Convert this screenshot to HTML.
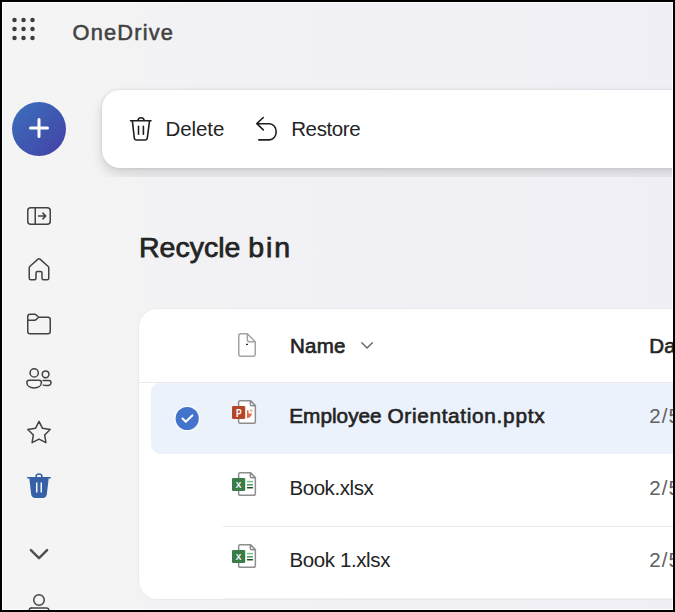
<!DOCTYPE html>
<html lang="en">
<head>
<meta charset="utf-8">
<title>Recycle bin - OneDrive</title>
<style>
html,body{margin:0;padding:0;}
body{width:675px;height:612px;overflow:hidden;background:#000;font-family:"Liberation Sans",sans-serif;}
#frame{position:absolute;left:0;top:0;width:675px;height:612px;background:#000;overflow:hidden;}
#inner{position:absolute;left:2px;top:2px;width:671px;height:608px;background:#fff;overflow:hidden;}
#app{position:absolute;left:0;top:0;width:671px;height:608px;overflow:hidden;box-shadow:inset 0 0 0 1px #fff;
  background:linear-gradient(90deg,#f4f4f4 0%,#f4f4f4 10%,#f2f2f5 30%,#f0eff5 100%);}
/* all coordinates below are relative to #app whose origin is (3,3) in page px */
.abs{position:absolute;}
.t{position:absolute;white-space:nowrap;line-height:1;}
svg{position:absolute;overflow:visible;}
#toolbarclip{position:absolute;left:80px;top:60px;width:589px;height:114px;overflow:hidden;}
#toolbar{position:absolute;left:19px;top:27px;width:600px;height:78px;background:#fff;border-radius:18px 0 0 18px;
  box-shadow:0 6px 12px rgba(0,0,0,.14),0 0 3px rgba(0,0,0,.12);}
#card{position:absolute;left:136px;top:305.5px;width:560px;height:290.5px;background:#fff;border-radius:18px 0 0 18px;
  box-shadow:0 0 0 1px rgba(0,0,0,.035);}
#sel{position:absolute;left:148px;top:380px;width:560px;height:71px;background:#ecf2fb;border-radius:9px 0 0 9px;}
.hr{position:absolute;height:1px;background:#ebebeb;}
</style>
</head>
<body>
<div id="frame"><div id="inner"><div id="app"><div id="o" class="abs" style="left:1px;top:1px;width:669px;height:606px;">

<!-- header -->
<svg width="30" height="30" style="left:5px;top:11px" viewBox="0 0 30 30">
  <g fill="#3d3d3d">
    <circle cx="6.5" cy="6.1" r="2.25"/><circle cx="15.5" cy="6.1" r="2.25"/><circle cx="24.5" cy="6.1" r="2.25"/>
    <circle cx="6.5" cy="15.1" r="2.25"/><circle cx="15.5" cy="15.1" r="2.25"/><circle cx="24.5" cy="15.1" r="2.25"/>
    <circle cx="6.5" cy="24.1" r="2.25"/><circle cx="15.5" cy="24.1" r="2.25"/><circle cx="24.5" cy="24.1" r="2.25"/>
  </g>
</svg>
<div class="t" id="t_brand" style="left:69.5px;top:19px;font-size:21.8px;color:#424242;-webkit-text-stroke:0.55px #424242;letter-spacing:1.2px;">OneDrive</div>

<!-- new button -->
<div class="abs" style="left:9px;top:99px;width:54px;height:54px;border-radius:50%;background:linear-gradient(135deg,#3c70bd 0%,#3f59b1 50%,#4340a6 100%);"></div>
<svg width="30" height="30" style="left:20.5px;top:110.2px" viewBox="0 0 30 30"><path d="M15 6.6V23.6M6.5 15.1H23.5" stroke="#fff" stroke-width="3" stroke-linecap="round" fill="none"/></svg>

<!-- toolbar -->
<div id="toolbarclip"><div id="toolbar"></div></div>

<!-- card -->
<div id="card"></div>
<div class="hr" style="left:136px;top:379px;width:540px;"></div>
<div id="sel"></div>
<div class="hr" style="left:220px;top:523px;width:460px;"></div>
<div class="hr" style="left:220px;top:595px;width:460px;background:#f0f0f0"></div>



<!-- text layer: page coordinates -->
<div id="txt" class="abs" style="left:-3px;top:-3px;width:675px;height:612px;">
  <div role="button" class="t" id="t_delete" style="left:165.4px;top:118.6px;font-size:20.5px;color:#242424;letter-spacing:-0.05px;">Delete</div>
  <div role="button" class="t" id="t_restore" style="left:291.2px;top:118.6px;font-size:20.5px;color:#242424;letter-spacing:-0.38px;">Restore</div>
  <h1 class="t" id="t_title" style="margin:0;left:139px;top:233.4px;font-size:28.5px;font-weight:normal;color:#242424;-webkit-text-stroke:0.75px #242424;letter-spacing:0;"><span>Recycle</span> <span style="letter-spacing:1.9px">bin</span></h1>
  <div role="columnheader" class="t" id="t_name" style="left:290px;top:336.3px;font-size:20.5px;color:#242424;-webkit-text-stroke:0.65px #242424;letter-spacing:0.25px;">Name</div>
  <div role="columnheader" class="t" id="t_date" style="left:649.3px;top:336.3px;font-size:20.5px;color:#242424;-webkit-text-stroke:0.65px #242424;letter-spacing:0.25px;">Date deleted</div>
  <div role="gridcell" class="t" id="t_r1" style="left:289.2px;top:406.3px;font-size:20.8px;color:#242424;-webkit-text-stroke:0.65px #242424;letter-spacing:0;"><span>Employee</span> <span style="letter-spacing:0.67px">Orientation</span><span style="letter-spacing:0.75px">.pptx</span></div>
  <div role="gridcell" class="t" id="t_r2" style="left:289.4px;top:478.3px;font-size:20.5px;color:#242424;letter-spacing:-0.42px;">Book.xlsx</div>
  <div role="gridcell" class="t" id="t_r3" style="left:289.4px;top:550.3px;font-size:20.5px;color:#242424;letter-spacing:-0.38px;">Book 1.xlsx</div>
  <div role="gridcell" class="t" id="t_d1" style="left:649.3px;top:405.6px;font-size:20.5px;color:#616161;letter-spacing:1.1px;">2/5/2024</div>
  <div role="gridcell" class="t" id="t_d2" style="left:649.3px;top:477.6px;font-size:20.5px;color:#616161;letter-spacing:1.1px;">2/5/2024</div>
  <div role="gridcell" class="t" id="t_d3" style="left:649.3px;top:549.6px;font-size:20.5px;color:#616161;letter-spacing:1.1px;">2/5/2024</div>
</div>
<!-- icon overlay: page coordinates -->
<svg id="icons" aria-hidden="true" width="675" height="612" viewBox="0 0 675 612" style="left:-3px;top:-3px;pointer-events:none">
 <g fill="none" stroke="#424242" stroke-width="1" stroke-linecap="round" stroke-linejoin="round">
  <!-- panel expand -->
  <g transform="translate(24,201) scale(1.5)">
    <rect x="2.5" y="4.5" width="15" height="11" rx="2"/>
    <path d="M7.5 4.5V15.5M9.7 10H14.3M12.6 8.1L14.5 10L12.6 11.9"/>
  </g>
  <!-- home -->
  <g transform="translate(24,255) scale(1.5)">
    <path d="M3.5 8.45c0-.28.12-.55.33-.74l5.5-4.95a1 1 0 0 1 1.34 0l5.5 4.95c.21.19.33.46.33.74v7.05a1 1 0 0 1-1 1H13a1 1 0 0 1-1-1V12a1 1 0 0 0-1-1H9a1 1 0 0 0-1 1v3.500a1 1 0 0 1-1 1H4.500a1 1 0 0 1-1-1Z"/>
  </g>
  <!-- folder -->
  <g transform="translate(24,309) scale(1.5)">
    <path d="M2.5 5A1.5 1.5 0 0 1 4 3.500H7.100c.4 0 .78.160 1.060.440L9.700 5.500H16A1.500 1.500 0 0 1 17.500 7V15A1.500 1.500 0 0 1 16 16.500H4A1.500 1.500 0 0 1 2.500 15ZM2.500 7.500H7.100c.4 0 .78-.16 1.060-.440L9.700 5.500"/>
  </g>
  <!-- people -->
  <g transform="translate(24,363) scale(1.5)">
    <circle cx="6.8" cy="6.6" r="2.75"/>
    <circle cx="14.4" cy="7.5" r="2.25"/>
    <path d="M3.400 11.500H10.100A1.500 1.500 0 0 1 11.600 13C11.600 15.200 9.500 16.600 6.750 16.600C4 16.600 1.900 15.200 1.900 13A1.500 1.500 0 0 1 3.400 11.500Z"/>
    <path d="M12.700 11.700H16.600A1.400 1.400 0 0 1 18 13.100C18 14.100 16.900 15.050 14.900 15.050C14.200 15.050 13.500 14.950 12.900 14.750"/>
  </g>
  <!-- star -->
  <g transform="translate(24,417) scale(1.5)">
    <path d="M10.00 2.90 L12.32 7.55 L17.47 8.32 L13.76 11.97 L14.61 17.10 L10.00 14.70 L5.39 17.10 L6.24 11.97 L2.53 8.32 L7.68 7.55Z"/>
  </g>
  <!-- person (bottom) -->
  <g transform="translate(24,591) scale(1.5)">
    <circle cx="10" cy="6" r="3.5"/>
    <path d="M5 11.300H15A1.500 1.500 0 0 1 16.500 12.800V14.500"/>
    <path d="M5 11.300A1.500 1.500 0 0 0 3.500 12.800V14.500"/>
  </g>
 </g>
 <!-- recycle bin (active, filled) -->
 <g transform="translate(24,471) scale(1.5)" fill="#3560a8">
   <path d="M8.500 4h3a1.500 1.500 0 0 0-3 0Zm-1 0a2.500 2.500 0 0 1 5 0h5a.5.5 0 0 1 0 1h-1.050l-1.200 10.340A3 3 0 0 1 12.270 18H7.730a3 3 0 0 1-2.980-2.660L3.550 5H2.500a.5.5 0 0 1 0-1h5ZM9 8a.5.5 0 0 0-1 0v6a.5.5 0 0 0 1 0V8Zm2.500-.5a.5.5 0 0 0-.5.500v6a.5.5 0 0 0 1 0V8a.5.5 0 0 0-.5-.500Z"/>
 </g>

 <!-- header doc icon -->
 <path d="M241 333.750H247.300L255.250 341.700V354a2.250 2.250 0 0 1-2.250 2.250H241a2.250 2.250 0 0 1-2.250-2.250V336a2.250 2.250 0 0 1 2.250-2.250ZM247.300 333.750V339.500a2.200 2.200 0 0 0 2.200 2.200H255.250" fill="#fff" stroke="#a3a3a3" stroke-width="1.500" stroke-linejoin="round"/>
 <rect x="246" y="343.800" width="2" height="1.100" fill="#111"/>
 <!-- name chevron -->
 <path d="M361.800 342.700L367.050 348L372.300 342.700" fill="none" stroke="#616161" stroke-width="1.300" stroke-linecap="round" stroke-linejoin="round"/>
 <!-- selected check -->
 <circle cx="187.200" cy="418.500" r="12.700" fill="#fff"/>
 <circle cx="187.200" cy="418.500" r="11.600" fill="#4373cb"/>
 <path d="M182.500 418.600L185.800 421.800L192.300 415.400" fill="none" stroke="#fff" stroke-width="2.100" stroke-linecap="round" stroke-linejoin="round"/>
 <!-- file type icons -->
 <g>
   <path d="M240.600 400.65H250.300L255.350 405.7V421.8a1.550 1.550 0 0 1-1.550 1.550H240.200a1.550 1.550 0 0 1-1.550-1.550V402.2a1.550 1.550 0 0 1 1.550-1.550Z" fill="#fff" stroke="#8e8e8e" stroke-width="1.500" stroke-linejoin="round"/>
   <path d="M250.300 400.65V404.25a1.450 1.450 0 0 0 1.450 1.450H255.350Z" fill="#f6f6f6" stroke="#8e8e8e" stroke-width="1.500" stroke-linejoin="round"/>
   <rect x="232" y="406" width="13.200" height="13" rx="1.300" fill="#b3472a"/>
   <text x="238.900" y="416.600" font-family="Liberation Sans, sans-serif" font-weight="bold" font-size="11" fill="#fff" text-anchor="middle" textLength="5.600" lengthAdjust="spacingAndGlyphs">P</text>
   <path d="M247 410.200H248.500V413.400H251.900A4.700 4.700 0 0 1 247 418Z" fill="#df6b48"/>
   <path d="M250 408.900V411.800H252.900A2.900 2.900 0 0 0 250 408.900Z" fill="#f2b9a5"/>
 </g>
 <g>
   <path d="M240.600 472.65H250.300L255.350 477.7V493.8a1.550 1.550 0 0 1-1.550 1.550H240.200a1.550 1.550 0 0 1-1.550-1.550V474.2a1.550 1.550 0 0 1 1.550-1.550Z" fill="#fff" stroke="#8e8e8e" stroke-width="1.500" stroke-linejoin="round"/>
   <path d="M250.300 472.65V476.25a1.450 1.450 0 0 0 1.450 1.450H255.350Z" fill="#f6f6f6" stroke="#8e8e8e" stroke-width="1.500" stroke-linejoin="round"/>
   <rect x="232" y="478" width="13.200" height="13" rx="1.300" fill="#397c48"/>
   <text x="238.600" y="488.2" font-family="Liberation Sans, sans-serif" font-weight="bold" font-size="9.600" fill="#fff" text-anchor="middle" textLength="5.600" lengthAdjust="spacingAndGlyphs">X</text>
   <rect x="247" y="480.85" width="5.900" height="1.500" fill="#74c193"/>
   <rect x="247" y="484.05" width="5.900" height="1.500" fill="#4b9e68"/>
   <rect x="247" y="486.95" width="5.900" height="1.500" fill="#1e4d2b"/>
 </g>
 <g>
   <path d="M240.600 544.65H250.300L255.350 549.6999999999999V565.8a1.550 1.550 0 0 1-1.550 1.550H240.200a1.550 1.550 0 0 1-1.550-1.550V546.1999999999999a1.550 1.550 0 0 1 1.550-1.550Z" fill="#fff" stroke="#8e8e8e" stroke-width="1.500" stroke-linejoin="round"/>
   <path d="M250.300 544.65V548.25a1.450 1.450 0 0 0 1.450 1.450H255.350Z" fill="#f6f6f6" stroke="#8e8e8e" stroke-width="1.500" stroke-linejoin="round"/>
   <rect x="232" y="550" width="13.200" height="13" rx="1.300" fill="#397c48"/>
   <text x="238.600" y="560.2" font-family="Liberation Sans, sans-serif" font-weight="bold" font-size="9.600" fill="#fff" text-anchor="middle" textLength="5.600" lengthAdjust="spacingAndGlyphs">X</text>
   <rect x="247" y="552.85" width="5.900" height="1.500" fill="#74c193"/>
   <rect x="247" y="556.05" width="5.900" height="1.500" fill="#4b9e68"/>
   <rect x="247" y="558.95" width="5.900" height="1.500" fill="#1e4d2b"/>
 </g>
 <!-- chevron down -->
 <path d="M30.900 550.100L39 558.200L47.100 550.100" fill="none" stroke="#505050" stroke-width="2.500" stroke-linecap="round" stroke-linejoin="round"/>

 <!-- toolbar: delete -->
 <g fill="none" stroke="#1f1f1f" stroke-width="1.600" stroke-linecap="round" stroke-linejoin="round">
   <path d="M130.500 120.800H151M138 120.800a3.100 3.100 0 0 1 6.200 0M132.400 121.200L134.300 138a2.300 2.300 0 0 0 2.300 2h8.400a2.300 2.300 0 0 0 2.300-2L149.500 121.200M138.500 126.400V134.300M143.400 126.400V134.300"/>
   <!-- restore -->
   <path d="M263.300 117.500L256.800 123.700L263.300 129.900M257 123.700H269.300a6.900 8.100 0 0 1 0 16.200H258.800"/>
 </g>
</svg>
</div></div></div></div>
</body>
</html>
